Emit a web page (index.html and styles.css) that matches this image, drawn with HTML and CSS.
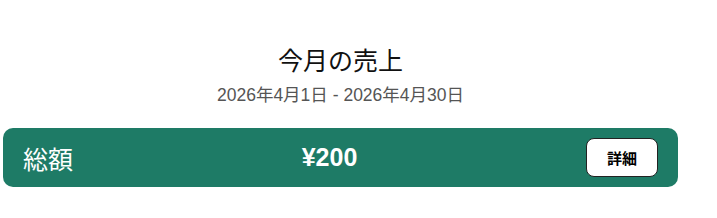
FILE: index.html
```html
<!DOCTYPE html>
<html lang="ja">
<head>
  <meta charset="UTF-8" />
  <meta name="viewport" content="width=device-width, initial-scale=1.0"/>
  <title>今月の売上</title>
  <link rel="stylesheet" href="styles.css">
</head>
<body>
  <div class="sales-container">
    <div class="sales-header">
      <div class="sales-title">今月の売上</div>
      <div class="sales-period">2026年4月1日 - 2026年4月30日</div>
    </div>

    <!-- Total -->
    <div class="total-bar">
      <span class="total-label">総額</span>
      <span class="total-amount">¥200</span>
      <button type="button" class="detail-btn">詳細</button>
    </div>
  </div>
</body>
</html>
```

FILE: styles.css
```css
body {
  margin: 0;
  padding: 0 3px;
  background-color: white;
  font-family: "Liberation Sans", Arial, "Noto Sans CJK JP", sans-serif;
}

.sales-container {
  width: 675px;
}

.sales-header {
  text-align: center;
  padding-top: 44px;
  margin-bottom: 21px;
}

.sales-title {
  font-size: 25px;
  line-height: 34px;
  color: #111;
}

.sales-period {
  font-size: 17.5px;
  line-height: 24px;
  color: #555;
  margin-top: 5px;
}

.total-bar {
  background-color: #1e7b66;
  color: white;
  border-radius: 10px;
  padding: 10px 20px;
  display: flex;
  justify-content: space-between;
  align-items: center;
}

.total-label {
  font-size: 25px;
}

.total-amount {
  font-size: 25px;
  font-weight: bold;
}

.detail-btn {
  width: 72px;
  height: 39px;
  background-color: white;
  color: black;
  border: 1px solid #222;
  border-radius: 8px;
  font-family: inherit;
  font-size: 15px;
  font-weight: bold;
  cursor: pointer;
}
```
